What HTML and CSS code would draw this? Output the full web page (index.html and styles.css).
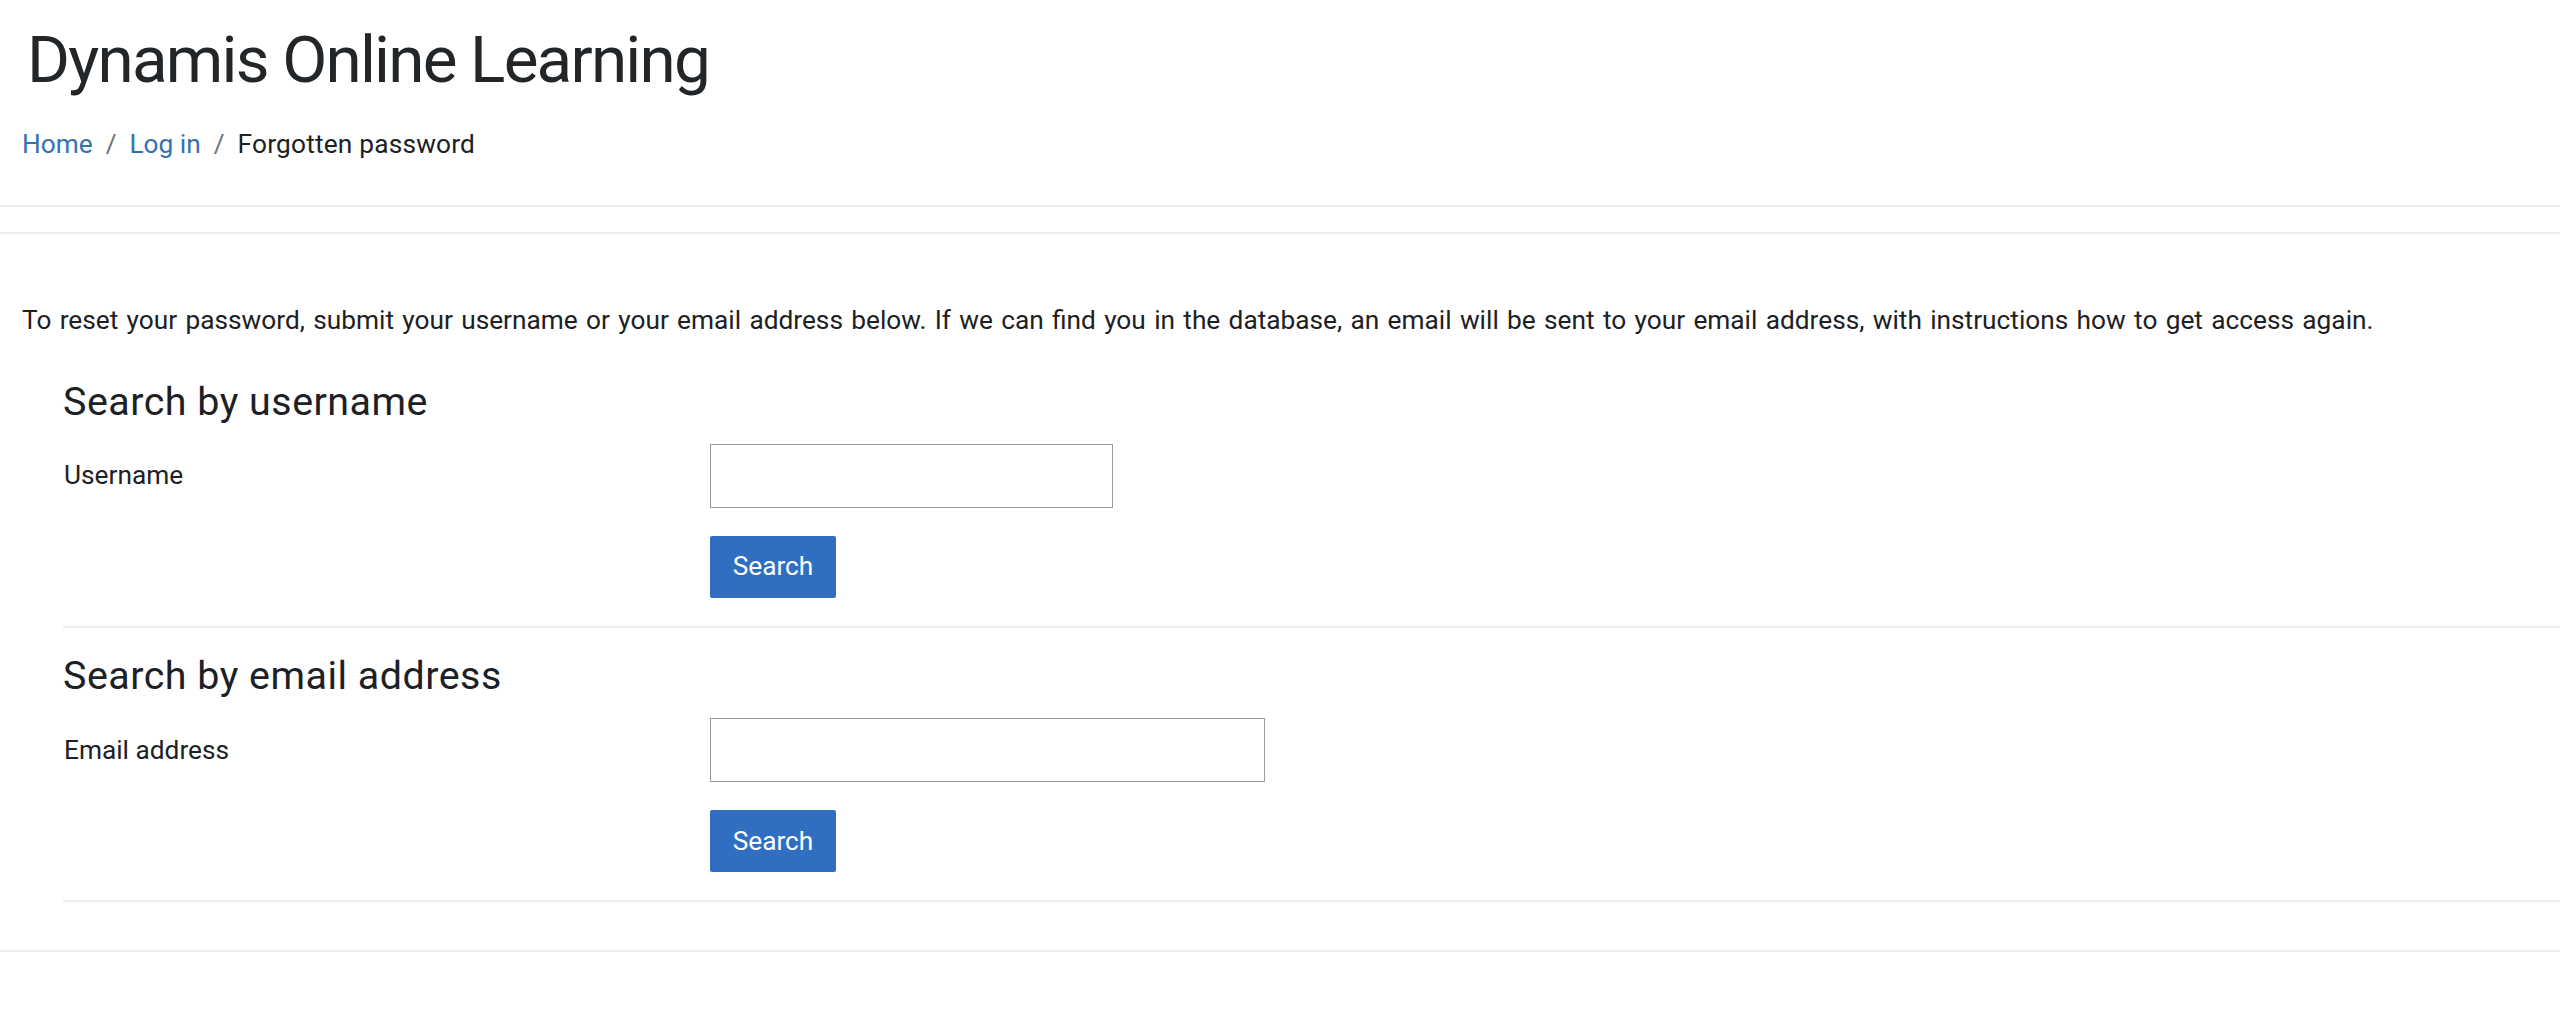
FILE: index.html
```html
<!DOCTYPE html>
<html lang="en">
<head>
<meta charset="utf-8">
<title>Forgotten password</title>
<link rel="stylesheet" href="styles.css">
</head>
<body>
<header class="page-header">
  <h1 class="site-title">Dynamis Online Learning</h1>
  <nav class="breadcrumb" aria-label="Navigation bar">
    <a href="#">Home</a><span class="sep">/</span><a href="#">Log in</a><span class="sep">/</span><span class="current">Forgotten password</span>
  </nav>
</header>
<main class="region-main">
  <p class="intro">To reset your password, submit your username or your email address below. If we can find you in the database, an email will be sent to your email address, with instructions how to get access again.</p>
  <form class="mform" action="#">
    <fieldset class="section first">
      <legend class="section-title">Search by username</legend>
      <div class="fitem">
        <label class="flabel" for="id_username">Username</label>
        <div class="felement"><input class="text-input short" id="id_username" type="text"></div>
      </div>
      <div class="fitem">
        <div class="flabel"></div>
        <div class="felement"><button class="btn-primary" type="button">Search</button></div>
      </div>
    </fieldset>
    <fieldset class="section">
      <legend class="section-title">Search by email address</legend>
      <div class="fitem">
        <label class="flabel" for="id_email">Email address</label>
        <div class="felement"><input class="text-input long" id="id_email" type="text"></div>
      </div>
      <div class="fitem">
        <div class="flabel"></div>
        <div class="felement"><button class="btn-primary" type="button">Search</button></div>
      </div>
    </fieldset>
  </form>
</main>
<div class="page-footer-rule"></div>
</body>
</html>
```
FILE: styles.css
```css
html, body {
  margin: 0;
  padding: 0;
  background: #ffffff;
}
body {
  font-family: Roboto, "Liberation Sans", Arial, sans-serif;
  font-size: 26.25px;
  line-height: 39.4px;
  color: #1d2125;
}
.page-header {
  padding: 20px 0 41px 0;
  border-bottom: 2px solid #eeeeee;
}
.site-title {
  margin: 0 0 0 27px;
  font-size: 65.6px;
  font-weight: 400;
  line-height: 79px;
  letter-spacing: -1.8px;
  color: #222629;
}
.breadcrumb {
  margin: 26px 0 0 22px;
  display: flex;
  align-items: baseline;
}
.breadcrumb a {
  color: #3571b0;
  text-decoration: none;
}
.breadcrumb .sep {
  color: #6a737b;
  padding: 0 13px;
}
.breadcrumb .current {
  color: #1d2125;
  letter-spacing: 0.2px;
}
.region-main {
  margin-top: 25px;
  border-top: 2px solid #eeeeee;
  padding: 67px 0 0 0;
}
.intro {
  margin: 0 0 37px 22px;
  word-spacing: 1.8px;
}
.mform {
  margin: 0 0 0 63px;
}
.section {
  margin: 0;
  padding: 0 0 28px 0;
  border: 0;
  border-bottom: 2px solid #eeeeee;
  min-width: 0;
}
.section + .section {
  padding-top: 24px;
}
.section-title {
  padding: 0;
  font-size: 39.4px;
  line-height: 47.25px;
  font-weight: 400;
  letter-spacing: 0.5px;
  color: #1d2125;
  float: left;
  width: 100%;
  margin: 0 0 19px 0;
}
.fitem {
  clear: both;
  display: grid;
  grid-template-columns: 647px 1fr;
  align-items: center;
  margin-bottom: 28px;
}
.fitem:last-child {
  margin-bottom: 0;
}
.flabel {
  padding-left: 1px;
}
.text-input {
  display: block;
  box-sizing: border-box;
  height: 64px;
  border: 1px solid #9c9c9c;
  border-radius: 0;
  background: #ffffff;
  margin: 0;
  padding: 0 12px;
  font: inherit;
}
.text-input.short {
  width: 403px;
}
.text-input.long {
  width: 555px;
}
.btn-primary {
  display: block;
  box-sizing: border-box;
  width: 126px;
  height: 62px;
  margin: 0;
  padding: 0;
  border: 0;
  border-radius: 2px;
  background: #2f6ec0;
  color: #ffffff;
  font: inherit;
  line-height: 39.4px;
}
.page-footer-rule {
  margin-top: 48px;
  border-top: 2px solid #eeeeee;
}
```
